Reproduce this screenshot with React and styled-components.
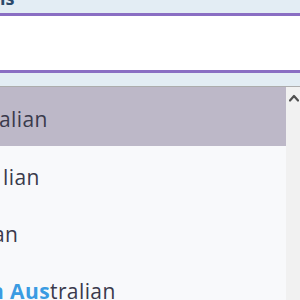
import React from "react";
import styled, { createGlobalStyle } from "styled-components";

const Global = createGlobalStyle`
  html, body { margin: 0; padding: 0; }
  body { background: #e3edf4; font-family: "Open Sans", "Noto Sans", sans-serif; overflow: hidden; }
`;

const Page = styled.div`
  width: 300px;
  height: 300px;
  overflow: hidden;
  background: #e3edf4;
  display: flex;
  flex-direction: column;
`;

const LabelRow = styled.div`
  height: 13px;
  overflow: hidden;
`;

const Label = styled.span`
  display: block;
  margin-top: -11px;
  font-size: 18px;
  font-weight: 700;
  color: #2b4a6b;
  line-height: 18px;
`;

const Field = styled.div`
  margin: 0 -10px;
  height: 54px;
  background: #ffffff;
  border-top: 3px solid #8a6ec3;
  border-bottom: 3px solid #8a6ec3;
  box-sizing: content-box;
`;

const Gap = styled.div`
  height: 13px;
`;

const Dropdown = styled.div`
  flex: 1;
  display: flex;
  border-top: 1px solid #adadad;
  background: #f8f9fb;
  min-height: 0;
`;

const List = styled.div`
  flex: 1;
  display: flex;
  flex-direction: column;
  overflow: hidden;
`;

const Option = styled.div`
  flex: none;
  height: ${(p) => p.$h}px;
  display: flex;
  align-items: center;
  background: ${(p) => (p.$active ? "#bdb8c8" : "transparent")};
  color: #3a3a4c;
  font-size: 21px;
  letter-spacing: 0.4px;
  white-space: nowrap;
  padding-top: 4px;
  box-sizing: border-box;
`;

const OptionText = styled.span`
  margin-left: ${(p) => p.$indent}px;
`;

const Match = styled.b`
  color: #3a9be2;
  font-weight: 700;
`;

const Scrollbar = styled.div`
  width: 14px;
  background: #f1f1f1;
  display: flex;
  flex-direction: column;
  align-items: center;
  padding-top: 7px;
`;

const Arrow = () => (
  <svg width="10" height="8" viewBox="0 0 10 8" style={{ marginLeft: 2 }}>
    <path d="M1 6.5 L5 2 L9 6.5" fill="none" stroke="#505050" strokeWidth="2.2" strokeLinecap="round" strokeLinejoin="round" />
  </svg>
);

export default function App() {
  return (
    <>
      <Global />
      <Page>
        <LabelRow>
          <Label>ls</Label>
        </LabelRow>
        <Field />
        <Gap />
        <Dropdown>
          <List>
            <Option $active $h={59}>
              <OptionText $indent={-1}>alian</OptionText>
            </Option>
            <Option $h={57}>
              <OptionText $indent={3}>lian</OptionText>
            </Option>
            <Option $h={57}>
              <OptionText $indent={-7}>an</OptionText>
            </Option>
            <Option $h={57}>
              <OptionText $indent={-10}>
                <Match>n</Match>&nbsp;<Match>Aus</Match>tralian
              </OptionText>
            </Option>
          </List>
          <Scrollbar>
            <Arrow />
          </Scrollbar>
        </Dropdown>
      </Page>
    </>
  );
}
